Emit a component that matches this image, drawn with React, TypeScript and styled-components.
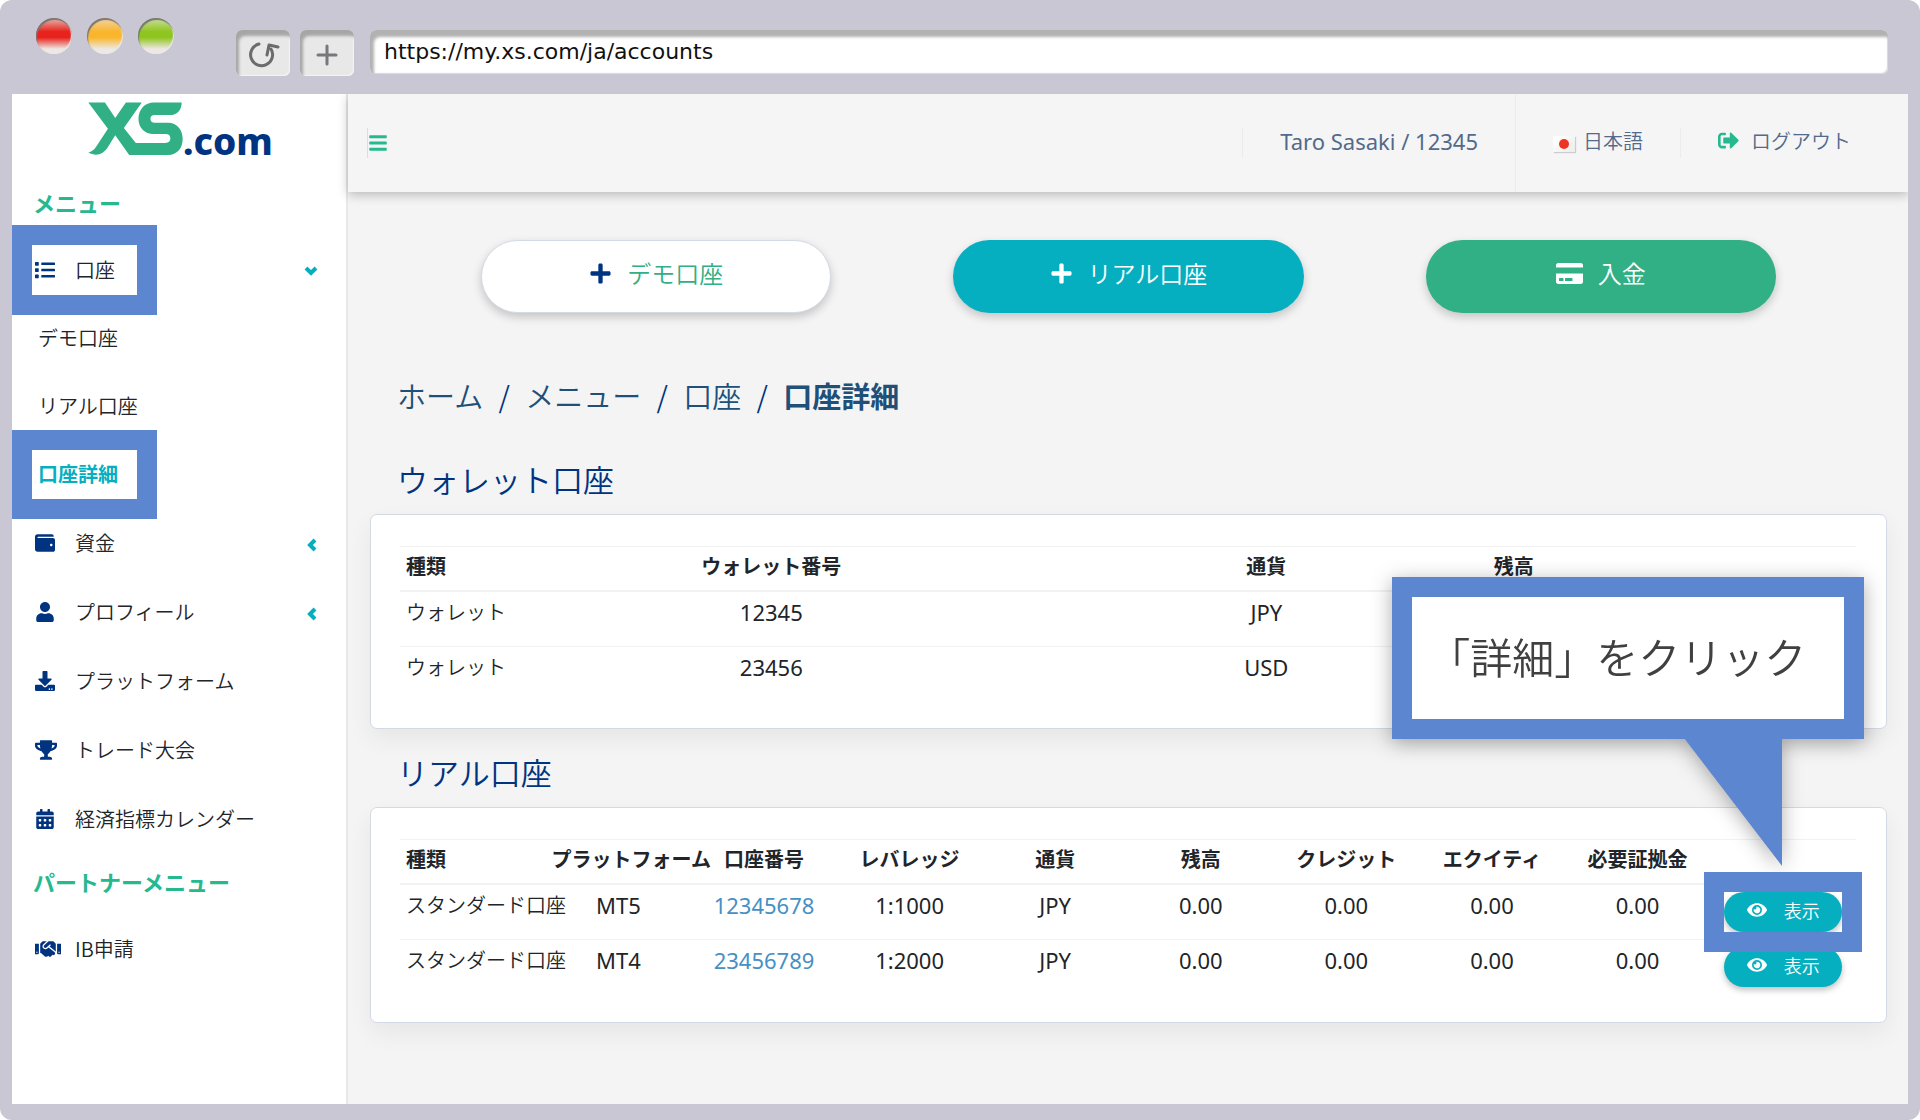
import React from 'react';
import styled, { createGlobalStyle, css } from 'styled-components';
import type { IconType } from 'react-icons';
import {
  FaBars, FaCalendarAlt, FaCreditCard, FaDownload,
  FaEye, FaHandshake, FaList, FaPlus, FaSignOutAlt, FaTrophy, FaUser, FaWallet,
} from 'react-icons/fa';

const color = {
  frame: '#c8c7d3',
  navy: '#003380',
  green: '#26b98f',
  leaf: '#31af85',
  teal: '#05afc0',
  mark: '#5c87d0',
  ink: '#212529',
  slate: '#526a8c',
  rule: '#f2f2f2',
};

const sans = `'Noto Sans', 'Noto Sans CJK JP', sans-serif`;
const japanese = `'Noto Sans CJK JP', sans-serif`;

const GlobalStyle = createGlobalStyle`
  *, *::before, *::after { box-sizing: border-box; }
  body { margin: 0; background: #fff; font-family: ${sans}; font-weight: 350; color: ${color.ink}; }
  a { color: inherit; text-decoration: none; }
  button { font: inherit; border: 0; padding: 0; cursor: pointer; }
`;

const Browser = styled.div`
  display: flex;
  flex-direction: column;
  min-height: 100vh;
  padding: 0 12px 16px;
  border-radius: 12px;
  background: ${color.frame};
`;

const Chrome = styled.div`
  display: flex;
  align-items: flex-start;
  height: 94px;
  padding: 18px 20px 0 24px;
`;

const Lights = styled.div`
  display: flex;
  gap: 15px;
  margin-right: 62px;
`;

const Light = styled.span<{ $tone: string; $glow: string }>`
  width: 36px;
  height: 36px;
  border-radius: 50%;
  background: linear-gradient(${p => p.$glow} 4%, ${p => p.$tone} 38%, ${p => p.$tone} 54%, #eee8e4 86%);
  box-shadow: inset 1px 2px 1px #777, inset -1px -1px 1px #e8e8e8;
`;

const ChromeButton = styled.button`
  display: grid;
  place-items: center;
  width: 54px;
  height: 46px;
  margin: 12px 10px 0 0;
  padding: 4px 0 0;
  border-radius: 6px;
  background: #e8e8e8;
  box-shadow: inset 3px 6px 3px #a6a6a6, inset -1px -1px 1px #f4f4f4;
`;

const Address = styled.input`
  flex: 1;
  min-width: 0;
  height: 44px;
  margin: 12px 0 0 6px;
  padding: 0 14px;
  border: 0;
  border-radius: 6px;
  background: #fff;
  box-shadow: inset 4px 7px 3px #b2b2b2, inset -1px -1px 1px #d8d8d8;
  font: 400 22px/44px 'DejaVu Sans', sans-serif;
  color: #111;
`;

const Page = styled.div`
  flex: 1;
  display: flex;
  background: #f4f4f4;
  overflow: hidden;
`;

const Sidebar = styled.aside`
  flex: 0 0 336px;
  border-right: 2px solid #e8e8e8;
  background: #fff;
`;

const Logo = styled.a`
  display: flex;
  align-items: flex-end;
  height: 61px;
  margin: 0 0 22px 76px;
`;

const LogoText = styled.span`
  font: 800 37px/29px 'Noto Sans', sans-serif;
  color: ${color.navy};
`;

const NavHeading = styled.h2<{ $spaced?: boolean }>`
  margin: 0;
  padding: 0 0 ${p => (p.$spaced ? 5 : 8)}px 21px;
  font: 700 22px/${p => (p.$spaced ? 56 : 50)}px ${japanese};
  color: ${color.green};
`;

const NavList = styled.ul`
  margin: 0;
  padding: 0;
  list-style: none;
`;

const NavItem = styled.li<{ $marked?: boolean }>`
  position: relative;
  ${p => p.$marked && css`
    &::after {
      content: '';
      position: absolute;
      inset: -10px auto -11px 0;
      width: 145px;
      border: 20px solid ${color.mark};
      pointer-events: none;
    }
  `}
`;

const NavLink = styled.a`
  display: grid;
  grid-template-columns: 40px 1fr 20px;
  align-items: center;
  height: 69px;
  padding: 0 24px 0 23px;
  font-family: ${japanese};
  font-size: 20px;
`;

const NavIcon = styled.span`
  display: flex;
  color: ${color.navy};
`;

const SubLink = styled.a<{ $active?: boolean }>`
  display: block;
  padding-left: 26px;
  font: ${p => (p.$active ? 700 : 350)} 20px/68px ${japanese};
  color: ${p => (p.$active ? color.teal : 'inherit')};
`;

const Main = styled.main`
  flex: 1;
  min-width: 0;
`;

const Header = styled.header`
  display: flex;
  align-items: center;
  justify-content: flex-end;
  height: 98px;
  padding: 0 20px 0 19px;
  background: #f5f5f5;
  box-shadow: 0 3px 10px rgba(0, 0, 0, 0.24);
  font-size: 20px;
  color: ${color.slate};
`;

const MenuToggle = styled.button`
  display: grid;
  place-items: center;
  width: 20px;
  height: 30px;
  margin-right: auto;
  border-left: 1px solid #ddd;
  background: none;
  color: ${color.green};
`;

const HeaderCell = styled.div<{ $full?: boolean; $gap?: number }>`
  display: flex;
  align-items: center;
  gap: ${p => p.$gap ?? 0}px;
  height: ${p => (p.$full ? 98 : 30)}px;
  padding: 0 37px 5px;
  border-left: 1px solid #ebebeb;
  white-space: nowrap;
  > svg { color: ${color.green}; }
`;

const UserName = styled.span`
  font-size: 22px;
  font-weight: 400;
`;

const Flag = styled.span`
  display: grid;
  place-items: center;
  width: 22px;
  height: 16px;
  margin-top: 6px;
  background: linear-gradient(135deg, #fff, #ececec);
  box-shadow: 1px 1px 1px #ccc;
  &::before {
    content: '';
    width: 10px;
    height: 10px;
    border-radius: 50%;
    background: #ee3524;
  }
`;

const Content = styled.div`
  padding: 48px 21px 32px 22px;
`;

const Actions = styled.div`
  display: grid;
  grid-template-columns: repeat(3, 1fr);
  gap: 122px;
  padding: 0 111px;
`;

const Action = styled.button<{ $bg: string; $fg: string; $icon?: string }>`
  display: flex;
  align-items: center;
  justify-content: center;
  gap: 15px;
  height: 73px;
  padding-bottom: 7px;
  border-radius: 37px;
  border: 1px solid ${p => (p.$icon ? '#d3dae4' : 'transparent')};
  background: ${p => p.$bg} border-box;
  box-shadow: 0 4px 10px rgba(0, 0, 0, 0.2);
  font: 350 24px/36px ${japanese};
  color: ${p => p.$fg};
  white-space: nowrap;
  > svg { color: ${p => p.$icon ?? 'inherit'}; }
`;

const Breadcrumb = styled.nav`
  margin: 60px 0 40px 27px;
  font: 350 29px/44px ${japanese};
  color: #205078;
  ol { display: flex; margin: 0; padding: 0; list-style: none; }
  li + li::before {
    content: '/';
    display: inline-block;
    width: 42px;
    text-align: center;
    color: ${color.navy};
  }
  a[aria-current] { font-weight: 700; }
`;

const Section = styled.section`
  & + & { margin-top: 21px; }
  h2 {
    margin: 0 0 13px 27px;
    font: 350 31px/44px ${japanese};
    color: ${color.navy};
  }
`;

const Card = styled.div`
  padding: 31px 30px 28px 29px;
  border: 1px solid #d3dae4;
  border-radius: 7px;
  background: #fff;
  box-shadow: 0 10px 24px rgba(0, 0, 0, 0.06);
`;

const Table = styled.table`
  width: 100%;
  border-collapse: separate;
  border-spacing: 0;
  table-layout: fixed;
  font-size: 20px;
  line-height: 24px;
  white-space: nowrap;

  th, td {
    padding: 7px 6px;
    border-top: 1px solid ${color.rule};
    text-align: center;
    vertical-align: top;
  }
  th { height: 46px; border-bottom: 2px solid ${color.rule}; font-family: ${japanese}; font-weight: 700; }
  td { height: 54px; font-size: 22px; font-weight: 400; line-height: 26px; }
  tbody tr:first-child td { border-top: 0; }
  th:first-child, td:first-child { text-align: left; }
  td:first-child { font: 350 20px/26px ${japanese}; }
  td > a { color: #4790c4; }
`;

const Col = styled.col<{ $width: string }>`
  width: ${p => p.$width};
`;

const ShowCell = styled.div<{ $marked?: boolean }>`
  position: relative;
  width: 118px;
  margin: 0 auto;
  ${p => p.$marked && css`
    z-index: 1;
    &::after {
      content: '';
      position: absolute;
      inset: -20px;
      border: 20px solid ${color.mark};
      pointer-events: none;
    }
  `}
`;

const ShowButton = styled.button`
  display: flex;
  align-items: center;
  justify-content: center;
  gap: 17px;
  width: 100%;
  height: 40px;
  padding-bottom: 5px;
  border-radius: 20px;
  background: ${color.teal};
  box-shadow: 0 3px 6px rgba(0, 0, 0, 0.25);
  font: 350 18px/26px ${japanese};
  color: #fff;
`;

const Callout = styled.div`
  position: absolute;
  right: -22px;
  bottom: calc(100% + 26px);
  padding-bottom: 127px;
  filter: drop-shadow(0 4px 10px rgba(0, 0, 0, 0.32));
  > svg { position: absolute; right: 82px; bottom: 0; display: block; }
`;

const CalloutText = styled.p`
  margin: 0;
  padding: 0 38px 4px 16px;
  border: 20px solid ${color.mark};
  background: #fff;
  font: 350 42px/118px ${japanese};
  color: #404040;
`;

type Item = { icon: IconType; size: number; label: string; chevron?: 'down' | 'left' };

const items: Item[] = [
  { icon: FaWallet, size: 20, label: '資金', chevron: 'left' },
  { icon: FaUser, size: 20, label: 'プロフィール', chevron: 'left' },
  { icon: FaDownload, size: 20, label: 'プラットフォーム' },
  { icon: FaTrophy, size: 22, label: 'トレード大会' },
  { icon: FaCalendarAlt, size: 20, label: '経済指標カレンダー' },
];

function Chevron({ direction }: { direction: 'down' | 'left' }) {
  return (
    <svg width="20" height="20" viewBox="0 0 20 20" fill="none" stroke={color.teal} strokeWidth="4">
      <path d={direction === 'down' ? 'M4 8L9 13L14 8' : 'M13 7L8 12L13 17'} />
    </svg>
  );
}

function Entry({ icon: Icon, size, label, chevron, marked }: Item & { marked?: boolean }) {
  return (
    <NavItem $marked={marked}>
      <NavLink href="#">
        <NavIcon><Icon size={size} /></NavIcon>
        {label}
        {chevron && <Chevron direction={chevron} />}
      </NavLink>
    </NavItem>
  );
}

function XsMark() {
  return (
    <svg width="95" height="53" viewBox="264 307 286 159" aria-hidden="true">
      <path
        fill={color.leaf}
        d="M265 308H315L346 355 378 308H426L372 385 408 430H497Q512 430 512 416 512 403 497 403H462C434 403 416 384 416 357 416 328 436 308 462 308H546C546 332 532 346 510 346H465Q452 346 452 357 452 369 465 369H505C532 369 549 390 549 418 549 446 532 466 505 466H388L346 407 324 442C310 464 290 472 265 459 280 454 284 448 290 439L324 387Z"
      />
    </svg>
  );
}

const walletRows = [
  ['ウォレット', '12345', '', 'JPY', '', ''],
  ['ウォレット', '23456', '', 'USD', '', ''],
];

const realRows = [
  { platform: 'MT5', number: '12345678', leverage: '1:1000' },
  { platform: 'MT4', number: '23456789', leverage: '1:2000' },
];

export default function App() {
  return (
    <>
      <GlobalStyle />
      <Browser>
        <Chrome>
          <Lights>
            <Light $tone="#e8221c" $glow="#e8a9a0" />
            <Light $tone="#f9b62d" $glow="#f4d09a" />
            <Light $tone="#8fc51f" $glow="#c5dd92" />
          </Lights>
          <ChromeButton aria-label="再読み込み">
            <svg width="34" height="30" viewBox="0 0 34 30" fill="none" stroke="#6b6b6b" strokeWidth="3" strokeLinecap="round" strokeLinejoin="round">
              <path d="M13 4A11 11 0 1 0 25 9M21 15L23 5L32 7" />
            </svg>
          </ChromeButton>
          <ChromeButton aria-label="新しいタブ">
            <svg width="22" height="22" viewBox="0 0 22 22" stroke="#77777c" strokeWidth="3" strokeLinecap="round">
              <path d="M11 2V20M2 11H20" />
            </svg>
          </ChromeButton>
          <Address aria-label="アドレス" defaultValue="https://my.xs.com/ja/accounts" />
        </Chrome>
        <Page>
          <Sidebar>
            <Logo href="#" aria-label="XS.com">
              <XsMark />
              <LogoText>.com</LogoText>
            </Logo>
            <nav>
              <NavHeading>メニュー</NavHeading>
              <NavList>
                <Entry icon={FaList} size={20} label="口座" chevron="down" marked />
                <NavItem><SubLink href="#">デモ口座</SubLink></NavItem>
                <NavItem><SubLink href="#">リアル口座</SubLink></NavItem>
                <NavItem $marked><SubLink href="#" $active>口座詳細</SubLink></NavItem>
                {items.map(item => <Entry key={item.label} {...item} />)}
              </NavList>
              <NavHeading $spaced>パートナーメニュー</NavHeading>
              <NavList>
                <Entry icon={FaHandshake} size={26} label="IB申請" />
              </NavList>
            </nav>
          </Sidebar>
          <Main>
            <Header>
              <MenuToggle aria-label="メニューを開閉"><FaBars size={20} /></MenuToggle>
              <HeaderCell><UserName>Taro Sasaki / 12345</UserName></HeaderCell>
              <HeaderCell $full $gap={8}><Flag />日本語</HeaderCell>
              <HeaderCell $gap={12}><FaSignOutAlt size={21} /><a href="#">ログアウト</a></HeaderCell>
            </Header>
            <Content>
              <Actions>
                <Action $bg="#fff" $fg={color.leaf} $icon={color.navy}><FaPlus size={23} />デモ口座</Action>
                <Action $bg={color.teal} $fg="#fff"><FaPlus size={23} />リアル口座</Action>
                <Action $bg={color.leaf} $fg="#fff"><FaCreditCard size={27} />入金</Action>
              </Actions>
              <Breadcrumb>
                <ol>
                  <li><a href="#">ホーム</a></li>
                  <li><a href="#">メニュー</a></li>
                  <li><a href="#">口座</a></li>
                  <li><a href="#" aria-current="page">口座詳細</a></li>
                </ol>
              </Breadcrumb>
              <Section>
                <h2>ウォレット口座</h2>
                <Card>
                  <Table>
                    <colgroup>
                      {[17, 17, 17, 17, 17, 15].map((w, i) => <Col key={i} $width={`${w}%`} />)}
                    </colgroup>
                    <thead>
                      <tr>{['種類', 'ウォレット番号', '', '通貨', '残高', ''].map((h, i) => <th key={i}>{h}</th>)}</tr>
                    </thead>
                    <tbody>
                      {walletRows.map(row => (
                        <tr key={row[1]}>{row.map((c, i) => <td key={i}>{c}</td>)}</tr>
                      ))}
                    </tbody>
                  </Table>
                </Card>
              </Section>
              <Section>
                <h2>リアル口座</h2>
                <Card>
                  <Table>
                    <thead>
                      <tr>
                        {['種類', 'プラットフォーム', '口座番号', 'レバレッジ', '通貨', '残高', 'クレジット', 'エクイティ', '必要証拠金', ''].map((h, i) => (
                          <th key={i}>{h}</th>
                        ))}
                      </tr>
                    </thead>
                    <tbody>
                      {realRows.map((r, i) => (
                        <tr key={r.number}>
                          <td>スタンダード口座</td>
                          <td>{r.platform}</td>
                          <td><a href="#">{r.number}</a></td>
                          <td>{r.leverage}</td>
                          <td>JPY</td>
                          <td>0.00</td>
                          <td>0.00</td>
                          <td>0.00</td>
                          <td>0.00</td>
                          <td>
                            <ShowCell $marked={i === 0}>
                              <ShowButton><FaEye size={20} />表示</ShowButton>
                              {i === 0 && (
                                <Callout>
                                  <CalloutText>「詳細」をクリック</CalloutText>
                                  <svg width="98" height="128" viewBox="0 0 98 128"><path d="M0 0H98V128Z" fill={color.mark} /></svg>
                                </Callout>
                              )}
                            </ShowCell>
                          </td>
                        </tr>
                      ))}
                    </tbody>
                  </Table>
                </Card>
              </Section>
            </Content>
          </Main>
        </Page>
      </Browser>
    </>
  );
}
